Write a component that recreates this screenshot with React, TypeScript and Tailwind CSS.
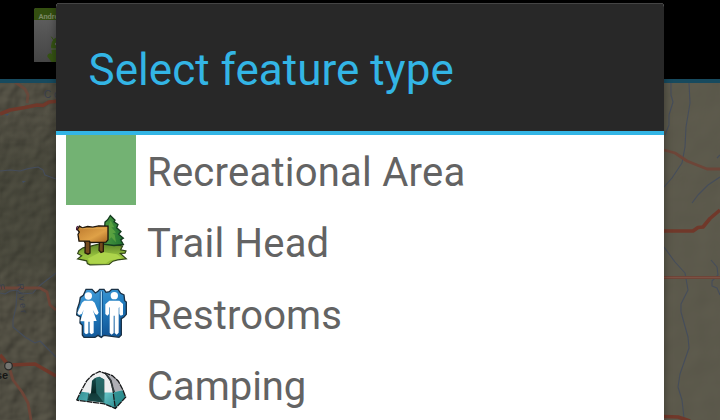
import type { ReactNode } from "react";

function TerrainMap() {
  return (
    <svg className="block h-[337px] w-full" viewBox="0 83 720 337">
      <defs>
        <filter id="relief" x="0" y="0" width="1" height="1" colorInterpolationFilters="sRGB">
          <feTurbulence type="fractalNoise" baseFrequency="0.07" numOctaves="2" seed="7" />
          <feColorMatrix values="0 0 0 0 0  0 0 0 0 0  0 0 0 0 0  1 0 0 0 0" />
          <feDiffuseLighting surfaceScale="1.5" lightingColor="#605d4f">
            <feDistantLight azimuth="225" elevation="56" />
          </feDiffuseLighting>
        </filter>
        <filter id="plain" x="0" y="0" width="1" height="1" colorInterpolationFilters="sRGB">
          <feTurbulence type="fractalNoise" baseFrequency="0.03" numOctaves="2" seed="3" />
          <feColorMatrix values="0 0 0 0 0  0 0 0 0 0  0 0 0 0 0  1 0 0 0 0" />
          <feDiffuseLighting surfaceScale="0.6" lightingColor="#6c6959">
            <feDistantLight azimuth="225" elevation="58" />
          </feDiffuseLighting>
        </filter>
        <linearGradient id="forest" x2="0" y2="1">
          <stop stopColor="#34382b" stopOpacity="0" />
          <stop offset=".3" stopColor="#34382b" stopOpacity=".3" />
          <stop offset=".75" stopColor="#34382b" stopOpacity=".3" />
          <stop offset="1" stopColor="#34382b" stopOpacity="0" />
        </linearGradient>
      </defs>
      <rect x="0" y="83" width="360" height="337" fill="#4b493d" />
      <rect x="0" y="83" width="60" height="337" filter="url(#relief)" />
      <rect x="0" y="110" width="60" height="190" fill="url(#forest)" />
      <rect x="660" y="83" width="60" height="337" filter="url(#plain)" />

      <g fill="none" stroke="#454d5b" strokeWidth="1.1" strokeLinejoin="round">
        <path d="M0 171 10 170 20 171 28 168.6 38 167 43 170 45 175 56 179" />
        <path d="M0 293 5 294 10 291 17 290 22 294 33 293 37 288 43 283 56 273" />
        <path d="M17 290 16 307 13 320 13 327 25 337 35 343 40 341 56 357" />
        <path d="M671 83 671 95 673 102 669 115 669 125 665 135M689 83 690 103 686 127 685 147 682 163 672 178 664 187" />
        <path d="M720 155 717 158M720 177 708 185 698 195 692 203" />
        <path d="M664 247 675 262 685 273 688 290 681 304 681 312 688 337 689 348 680 374 678 387 682 400 684 418" />
        <path d="M711 260 717 267 718 275 712 281 712 286 717 288 720 295" />
      </g>
      <path d="M5 114h4l-2 2zM22 181h4l-3 2zM50 226l4-2" fill="#414d62" />
      <g fill="none" stroke="#6d4538" strokeWidth="2.8" strokeLinejoin="round">
        <path d="M15 82 25 89 28 95 27 103" opacity=".75" />
        <path d="M0 288H40L47 292 50 305 56 310" />
        <path d="M10 370 13 380 22 392 28 403 31 420" />
        <path d="M664 150 675 153 687 161 707 169 720 169" />
        <path d="M664 277.5H720" strokeWidth="3.2" />
      </g>
      <path d="M664 277.5H720" stroke="#7c5144" strokeWidth="1" />
      <g fill="none" stroke="#70382a" strokeWidth="3.6" strokeLinejoin="round">
        <path d="M0 114 10 110 25 107.5 37 105 43 105.5 49 102 60 101" />
        <path d="M0 355 8.5 365 35 364 56 376" />
        <path d="M664 231H693L698 227.5 703 227 710 218.5 720 210" />
        <path d="M664 416.5 678 417 690 421" />
      </g>
      <circle cx="8.5" cy="366" r="3.8" fill="#747470" stroke="#2b2b29" strokeWidth="1.3" />
      <g fontFamily="'Liberation Sans', sans-serif">
        <text x="-4" y="379" fontSize="11" fontWeight="700" fill="#161615">se</text>
        <g fill="#393f4c">
          <text x="44" y="97.500" fontSize="10">C</text>
          <text x="54" y="97.500" fontSize="10">o</text>
          <text x="0" y="289" fontSize="9" transform="rotate(-8 3 287)">n</text>
          <text x="0" y="0" fontSize="9" letterSpacing="2.200" transform="translate(17 284) rotate(82)">River</text>
        </g>
      </g>
    </svg>
  );
}

function AppIcon() {
  return (
    <svg className="h-[54px] w-[54px]" viewBox="0 0 54 54">
      <defs>
        <linearGradient id="page" x2="0" y2="1">
          <stop stopColor="#626262" />
          <stop offset="1" stopColor="#454545" />
        </linearGradient>
      </defs>
      <path d="M2 0H52Q54 0 54 3V54H0V3Q0 0 2 0Z" fill="url(#page)" />
      <path d="M2 0H52Q54 0 54 3V12H0V3Q0 0 2 0Z" fill="#344f10" />
      <text x="4.500" y="11" fontSize="7.500" fontWeight="700" fontFamily="Roboto, sans-serif" fill="#7b8865">Android</text>
      <g fill="#355313" stroke="#355313" strokeLinecap="round">
        <path d="M17 38a10 10 0 0 1 20 0v15H22L18 47z" stroke="none" />
        <path d="M17.500 29 21 34" strokeWidth="1" />
        <path d="M16 48 20 53" strokeWidth="5" />
      </g>
      <circle cx="22" cy="36" r="1.200" fill="#626262" />
      <path d="M17 41H36" stroke="#595959" />
    </svg>
  );
}

function TrailHeadIcon() {
  return (
    <svg className="h-[70px] w-[70px]" viewBox="18 19.500 210 210">
      <defs>
        <linearGradient id="wood" x2="1" y2="1"><stop stopColor="#bb782d" /><stop offset=".6" stopColor="#dfa147" /><stop offset="1" stopColor="#a66522" /></linearGradient>
        <linearGradient id="tree"><stop stopColor="#4d9b40" /><stop offset="1" stopColor="#217231" /></linearGradient>
        <linearGradient id="grass" x2="0" y2="1"><stop stopColor="#587f27" /><stop offset=".6" stopColor="#98c33f" /><stop offset="1" stopColor="#96bd37" /></linearGradient>
      </defs>
      <path d="M57 153 69 145 92 140 130 130 188 139 182 151 198 154 195 161 181 162 199 178 173 181 159 185 147 195 90 196 82 192 80 184 53 178 65 169 53 162Z" fill="url(#grass)" stroke="#2f4417" strokeWidth="3.500" />
      <path d="M84 177 123 157 171 164 186 176 151 182 137 192 89 192Z" fill="#add44b" />
      <path d="M151 48 143 61 135 68 134 85 129 106 131 134 162 138 190 135 182 121 190 116 176 104 183 96 170 85 174 75 162 67 165 62Z" fill="url(#tree)" stroke="#153c20" strokeWidth="4" />
      <path d="M152 63 145 80 145 123 154 113 168 128 164 105 157 102 168 99 154 83 163 83Z" fill="#67ac43" opacity=".7" />
      <path d="M72 123 90 125V161L84 164 75 160 76 132ZM119 121 130 123V156L123 159 117 152Z" fill="#744a1d" stroke="#271a0b" strokeWidth="4" />
      <path d="M58 80 67 85 83 81 98 83 116 79 144 80V121L138 128 91 129 88 125 57 125 54 105 58 98 52 90Z" fill="url(#wood)" stroke="#1e160c" strokeWidth="4" />
      <path d="M61 87H137" stroke="#eab558" strokeWidth="4" opacity=".5" />
      <path d="M53 80 50 85V92" fill="none" stroke="#461638" strokeWidth="4" />
    </svg>
  );
}

function RestroomsIcon() {
  return (
    <svg className="h-[70px] w-[70px]" viewBox="18 9 210 210">
      <defs>
        <linearGradient id="blue" x2=".4" y2="1"><stop stopColor="#49a0da" /><stop offset=".5" stopColor="#2380c2" /><stop offset="1" stopColor="#125899" /></linearGradient>
      </defs>
      <path d="M78 43H96L106 54 114 49 119 43H132L138 52 148 50 155 43H174L182 55 192 60 194 77 199 81V118L192 126 184 131V180L177 187 132 181 124 187 114 181 105 187H72L67 180V151L60 144 61 126 50 120 52 102 58 84 61 67 70 61Z" fill="url(#blue)" stroke="#1a3146" strokeWidth="4" />
      <path d="M124 49V181" stroke="#0f508c" strokeWidth="9" />
      <path d="M124 49V182" stroke="#a9d6f0" strokeWidth="4" />
      <g fill="#fff">
        <ellipse cx="85" cy="63" rx="11" ry="11" />
        <path d="M73 77H97L104 83 116 113 111 120 105 117 98 104 110 138H101V174L94 178 89 173V140H85V175L78 178 73 173V139H61L71 104 65 117 57 120 52 114 66 83Z" />
        <ellipse cx="163" cy="62" rx="11" ry="11" />
        <path d="M148 77H178L189 87V119L182 122 178 117V96L176 99V173L170 179 164 174V122H161V174L155 179 149 174V98L147 96V117L142 122 136 117V88Z" />
      </g>
    </svg>
  );
}

function CampingIcon() {
  return (
    <svg className="h-[70px] w-[70px]" viewBox="18 -1.500 210 210">
      <defs>
        <linearGradient id="teal" x2="1" y2=".4"><stop stopColor="#2e8a8f" /><stop offset=".6" stopColor="#60bec1" /><stop offset="1" stopColor="#329094" /></linearGradient>
        <linearGradient id="door" x2="0" y2="1"><stop stopColor="#164d4d" /><stop offset=".6" stopColor="#082826" /><stop offset="1" stopColor="#297170" /></linearGradient>
      </defs>
      <path d="M50 152 64 123 80 94 98 76 119 66 134 70 157 78 175 95 188 120 197 143 166 177 133 162Z" fill="#eeeff0" />
      <path d="M139 75 158 79 175 96 187 122 164 128 157 104Z" fill="#afafb5" />
      <path d="M50 151 64 127 88 130 83 156ZM129 129H160L187 122 197 143 166 177 131 163Z" fill="url(#teal)" />
      <path d="M162 128 187 123 196 143 168 174Z" fill="#28898b" opacity=".75" />
      <path d="M96 94 104 86 118 82 133 90V160L82 153 93 129Z" fill="url(#door)" />
      <path d="M107 85 118 82 132 90V159L109 132Z" fill="#2e7775" opacity=".75" />
      <path d="M85 133 110 131 131 159 82 153Z" fill="#143d3c" opacity=".8" />
      <g fill="none" stroke="#17191a" strokeWidth="4" strokeDasharray="18 2">
        <path d="M50 152 64 123 80 94 98 76 119 66 137 72 150 91 158 110 161 139 166 176" />
        <path d="M134 70 157 78 175 95 188 120 197 143 166 177 133 163 50 152" />
      </g>
      <path d="M137 73 153 93 157 113 163 128" fill="none" stroke="#333a3c" strokeWidth="5" />
    </svg>
  );
}

function FeatureRow({ label, icon, tracking }: { label: string; icon: ReactNode; tracking: string }) {
  return (
    <li className="flex h-[71.33px] items-start gap-[11px] pl-[10px]">
      <div className="h-[70px] w-[70px] shrink-0">{icon}</div>
      <span className={`pt-[2px] text-[40px] leading-[72px] whitespace-nowrap text-[#636363] ${tracking}`}>{label}</span>
    </li>
  );
}

export default function App() {
  return (
    <div className="relative h-[420px] w-[720px] overflow-hidden bg-black font-[Roboto,sans-serif]">
      <header className="flex h-[83px] items-start border-b-4 border-[#174a5e] bg-black pt-[8px] pl-[34px]">
        <AppIcon />
      </header>
      <TerrainMap />
      <section className="absolute top-[3px] left-[56px] flex h-[430px] w-[608px] flex-col overflow-hidden rounded-t-[4px] bg-white shadow-[0_0_7px_1px_rgba(0,0,0,0.3)]">
        <h1 className="flex h-[132px] shrink-0 items-center border-t border-b-4 border-t-[#454545] border-b-[#33b5e5] bg-[#282828] pt-[5px] pl-[32.5px] text-[44px] leading-none tracking-[0.04px] whitespace-nowrap text-[#33b5e5]">
          Select feature type
        </h1>
        <ul>
          <FeatureRow label="Recreational Area" icon={<div className="h-full w-full bg-[#73b273]" />} tracking="tracking-[0.24px]" />
          <FeatureRow label="Trail Head" icon={<TrailHeadIcon />} tracking="tracking-[0.2px]" />
          <FeatureRow label="Restrooms" icon={<RestroomsIcon />} tracking="tracking-[0.1px]" />
          <FeatureRow label="Camping" icon={<CampingIcon />} tracking="tracking-[-0.05px]" />
        </ul>
      </section>
    </div>
  );
}
